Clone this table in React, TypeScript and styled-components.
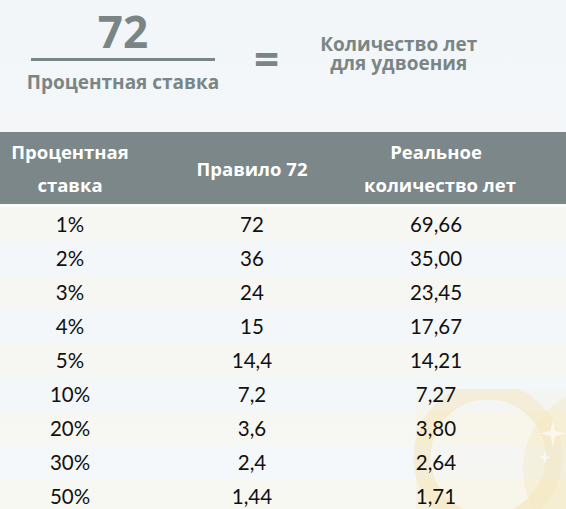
import styled, { createGlobalStyle } from 'styled-components';

const GlobalStyle = createGlobalStyle`
  html, body {
    margin: 0;
    padding: 0;
    background: #f6f8fa;
  }
  * {
    box-sizing: border-box;
  }
`;

const ROWS = [
  ['1%', '72', '69,66'],
  ['2%', '36', '35,00'],
  ['3%', '24', '23,45'],
  ['4%', '15', '17,67'],
  ['5%', '14,4', '14,21'],
  ['10%', '7,2', '7,27'],
  ['20%', '3,6', '3,80'],
  ['30%', '2,4', '2,64'],
  ['50%', '1,44', '1,71'],
];

// faded mug picture behind the bottom right of the table
const Mug = () => (
  <Decor viewBox="0 0 166 140" aria-hidden>
    <defs>
      <linearGradient id="wash" x1="0" y1="0" x2="0" y2="1">
        <stop offset="0" stopColor="#f9e7b9" stopOpacity="0.3" />
        <stop offset="1" stopColor="#f6dc98" stopOpacity="0.5" />
      </linearGradient>
    </defs>
    <rect x="16" y="0" width="150" height="140" fill="url(#wash)" />
    <circle cx="88" cy="68" r="66" fill="none" stroke="#f4d27e" strokeOpacity="0.6" strokeWidth="17" />
    <circle cx="88" cy="68" r="57" fill="#fbf7ec" fillOpacity="0.75" />
    <circle cx="205" cy="80" r="82" fill="#f5d584" fillOpacity="0.5" />
    <path d="M153 31 L155.5 42 L166 44.5 L155.5 47 L153 58 L150.5 47 L140 44.5 L150.5 42 Z" fill="#fffaf0" />
    <path d="M145 62 L146.3 67 L151 68.5 L146.3 70 L145 75 L143.7 70 L139 68.5 L143.7 67 Z" fill="#fffaf0" />
  </Decor>
);

const App = () => {
  return (
    <Page>
      <GlobalStyle />
      <Formula>
        <Fraction>
          <Numerator>72</Numerator>
          <Bar />
          <Denominator>Процентная ставка</Denominator>
        </Fraction>
        <Equals>=</Equals>
        <Result>
          <ResultLine>Количество лет</ResultLine>
          <ResultLine>для удвоения</ResultLine>
        </Result>
      </Formula>
      <Table>
        <Mug />
        <HeadRow>
          <HeadCell>
            Процентная
            <br />
            ставка
          </HeadCell>
          <HeadCell>Правило 72</HeadCell>
          <HeadCell>
            Реальное
            <br />
            количество лет
          </HeadCell>
          <span />
        </HeadRow>
        <Gap />
        {ROWS.map((r, i) => (
          <Row key={r[0]} $cream={i % 2 === 0}>
            <Cell>{r[0]}</Cell>
            <Cell>{r[1]}</Cell>
            <Cell>{r[2]}</Cell>
            <span />
          </Row>
        ))}
      </Table>
    </Page>
  );
};

export default App;

const Page = styled.div`
  width: 566px;
  height: 509px;
  overflow: hidden;
  background: linear-gradient(180deg, #f3f6f8 0%, #f7f9fb 100%);
  font-family: 'Open Sans', 'Liberation Sans', sans-serif;
`;

const Formula = styled.div`
  height: 132px;
  display: flex;
  align-items: flex-start;
  padding: 5px 0 0 26px;
  color: #7a8686;
`;

const Fraction = styled.div`
  width: 194px;
  display: flex;
  flex-direction: column;
  align-items: center;
`;

const Numerator = styled.div`
  font-size: 44px;
  font-weight: 700;
  line-height: 53px;
  height: 53px;
`;

const Bar = styled.div`
  width: 184px;
  height: 3px;
  background: #7a8686;
`;

const Denominator = styled.div`
  font-size: 19px;
  font-weight: 700;
  line-height: 26px;
  margin-top: 8px;
  white-space: nowrap;
`;

const Equals = styled.div`
  font-size: 44px;
  font-weight: 700;
  line-height: 44px;
  margin: 31px 0 0 34px;
`;

const Result = styled.div`
  display: flex;
  flex-direction: column;
  align-items: center;
  margin: 30px 0 0 41px;
`;

const ResultLine = styled.div`
  font-size: 19px;
  font-weight: 700;
  line-height: 19px;
  height: 19px;
  white-space: nowrap;
`;

const Table = styled.div`
  position: relative;
`;

const Decor = styled.svg`
  position: absolute;
  right: 0;
  bottom: -16px;
  width: 166px;
  height: 140px;
  z-index: 0;
`;

const Columns = styled.div`
  position: relative;
  z-index: 1;
  display: grid;
  grid-template-columns: 140px 224px 144px 1fr;
  align-items: center;
`;

const HeadRow = styled(Columns)`
  height: 72px;
  background: #7b8789;
  color: #ffffff;
`;

const HeadCell = styled.div`
  font-size: 18.5px;
  font-weight: 700;
  line-height: 33px;
  text-align: center;
  white-space: nowrap;
`;

const Gap = styled.div`
  height: 3px;
  background: #fafbfb;
`;

const Row = styled(Columns)<{ $cream: boolean }>`
  height: 34px;
  background: ${(p) => (p.$cream ? 'rgba(247, 246, 236, 0.6)' : 'rgba(241, 246, 250, 0.6)')};
`;

const Cell = styled.div`
  font-family: Lato, 'Liberation Sans', sans-serif;
  font-size: 20.5px;
  color: #111111;
  text-align: center;
  line-height: 34px;
`;
